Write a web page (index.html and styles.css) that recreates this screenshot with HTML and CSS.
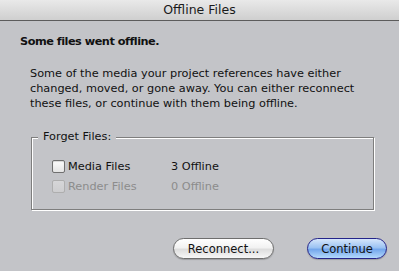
FILE: index.html
```html
<!DOCTYPE html>
<html>
<head>
  <title>Offline Files</title>
  <link rel="stylesheet" href="styles.css">
</head>
<body>
  <!-- Title Bar -->
  <div class="titlebar">Offline Files</div>

  <div class="sheet">
    <div class="heading">Some files went offline.</div>
    <p class="message">Some of the media your project references have either changed, moved, or gone away. You can either reconnect these files, or continue with them being offline.</p>

    <!-- Forget Files group -->
    <fieldset class="group">
      <legend>Forget Files:</legend>
      <div class="file-row">
        <span class="checkbox"></span>
        <span class="file-name">Media Files</span>
        <span class="file-count">3 Offline</span>
      </div>
      <div class="file-row disabled">
        <span class="checkbox"></span>
        <span class="file-name">Render Files</span>
        <span class="file-count">0 Offline</span>
      </div>
    </fieldset>

    <div class="actions">
      <button class="btn btn-reconnect">Reconnect...</button>
      <button class="btn btn-default">Continue</button>
    </div>
  </div>
</body>
</html>
```

FILE: styles.css
```css
/* Base Styles */
body, html {
  margin: 0;
  padding: 0;
  height: 100%;
  font-family: 'DejaVu Sans', 'Noto Sans', sans-serif;
  background: #c3c4c8;
  color: #111;
  overflow: hidden;
}

/* Title Bar */
.titlebar {
  height: 20px;
  line-height: 20px;
  text-align: center;
  font-size: 12.5px;
  color: #1a1a1a;
  background: linear-gradient(to bottom, #e9e9e9, #cfcfcf);
  border-bottom: 1px solid #5c5c5c;
}

/* Sheet Content */
.sheet {
  padding: 13px 12px 0 20px;
}

.heading {
  font-size: 11.3px;
  font-weight: bold;
  letter-spacing: -0.5px;
  line-height: 15px;
}

.message {
  max-width: 335px;
  margin: 17px 0 0 10px;
  font-size: 11.3px;
  line-height: 15px;
}

/* Group Box */
.group {
  margin: 19px 13px 0 11px;
  padding: 12px 0 13px 20px;
  border: 1px solid #7e7e7e;
  box-shadow: 1px 1px 0 #fff, inset 1px 1px 0 #fff;
}

.group legend {
  margin-left: -14px;
  padding: 0 5px;
  font-size: 11.3px;
  line-height: 14px;
  background: #c3c4c8;
}

.file-row {
  display: flex;
  align-items: center;
  height: 20px;
  font-size: 11.3px;
}

.file-name {
  width: 103px;
  margin-left: 3px;
}

.checkbox {
  width: 11px;
  height: 11px;
  border: 1px solid #707070;
  border-radius: 2px;
  background: linear-gradient(to bottom, #fdfdfd, #e4e4e4);
  box-shadow: inset 0 1px 1px rgba(0, 0, 0, 0.15);
}

.file-row.disabled {
  color: #8c8c8c;
}

.file-row.disabled .checkbox {
  border-color: #aeaeae;
  background: linear-gradient(to bottom, #d6d6d8, #cdcdcf);
  box-shadow: none;
}

/* Buttons */
.actions {
  display: flex;
  justify-content: flex-end;
  gap: 33px;
  margin-top: 28px;
}

.btn {
  height: 21px;
  padding: 0;
  border: 1px solid #6e6e6e;
  border-radius: 11px;
  font-family: 'DejaVu Sans', 'Noto Sans', sans-serif;
  font-size: 11.5px;
  color: #111;
  background: linear-gradient(to bottom, #ffffff 0%, #f2f2f2 45%, #dedede 55%, #f7f7f7 100%);
  box-shadow: 0 1px 1px rgba(0, 0, 0, 0.2);
}

.btn-reconnect {
  width: 101px;
}

.btn-default {
  width: 80px;
  border-color: #24248a;
  background: linear-gradient(to bottom, #d6e6fb 0%, #9cc3f3 45%, #74a7ec 55%, #b4dafc 100%);
}
```
